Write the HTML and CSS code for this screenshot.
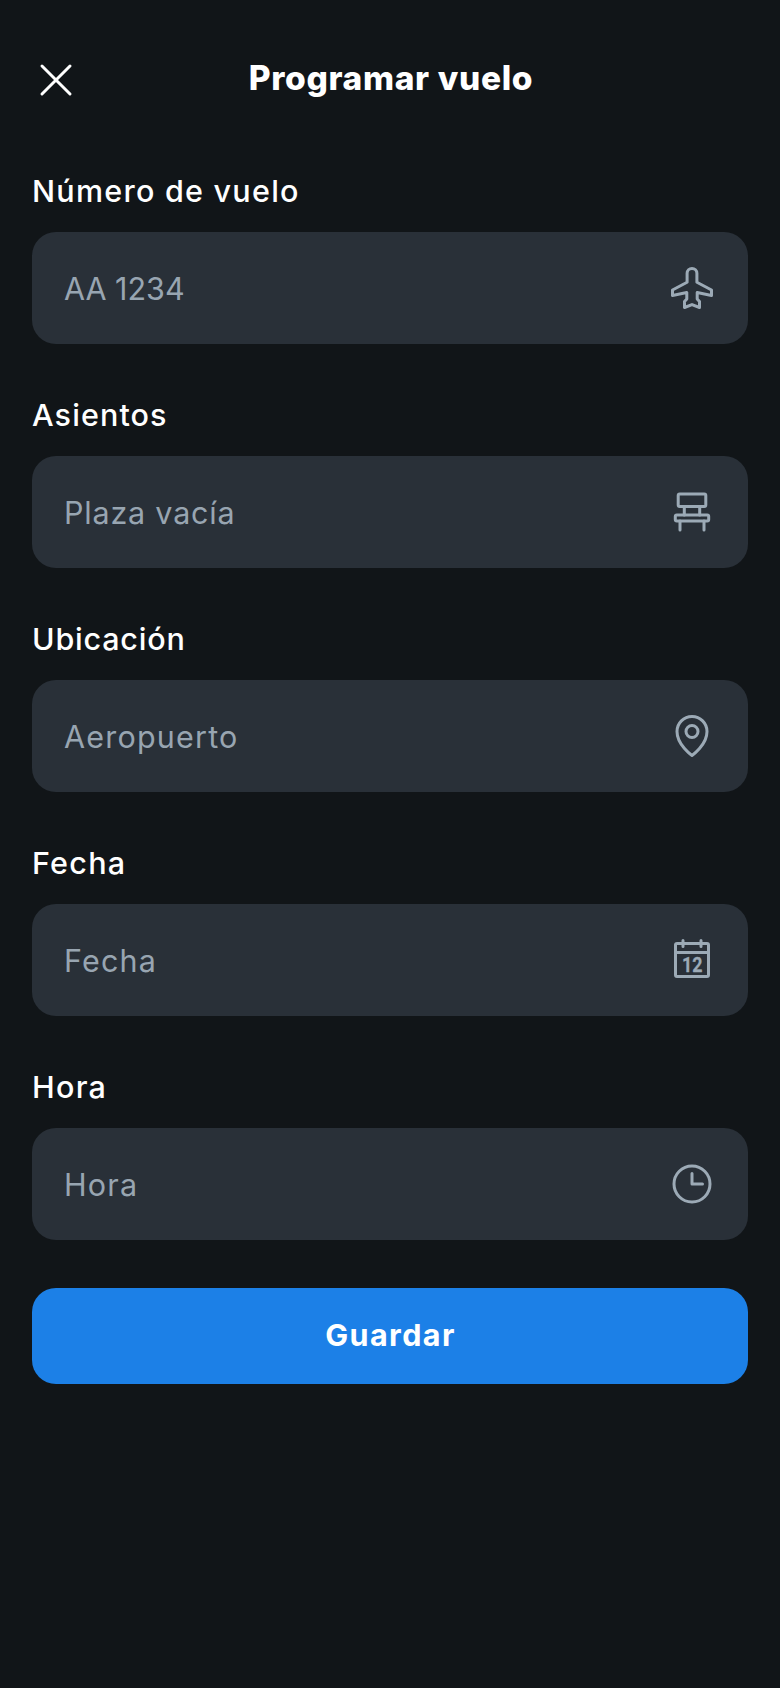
FILE: index.html
```html
<!DOCTYPE html>
<html lang="es">
<head>
<meta charset="utf-8">
<title>Programar vuelo</title>
<link rel="stylesheet" href="styles.css">
</head>
<body>
<main class="screen">
  <header class="header">
    <button class="close" type="button" aria-label="Cerrar">
      <svg class="icon" viewBox="0 0 48 48"><path d="M10 10 38 38M38 10 10 38"/></svg>
    </button>
    <h1 class="title">Programar vuelo</h1>
    <span class="spacer"></span>
  </header>
  <form class="form">
    <label class="field">
      <span class="label label-flight">Número de vuelo</span>
      <span class="box">
        <input class="input input-flight" placeholder="AA 1234">
        <svg class="icon" viewBox="0 0 48 48"><path d="M19.1 18.2V9.3a4.9 4.9 0 0 1 9.8 0v8.9L43.5 26v5.5l-14.3-3V35l2.3 2.6V43.5L24 40.6l-7.5 2.9V37.6L18.8 35V28.5L4.5 31.5V26Z"/></svg>
      </span>
    </label>
    <label class="field">
      <span class="label label-seats">Asientos</span>
      <span class="box">
        <input class="input input-seats" placeholder="Plaza vacía">
        <svg class="icon" viewBox="0 0 48 48"><rect x="10.2" y="6" width="27.6" height="12.4" rx="1.5"/><rect x="7.3" y="26.9" width="33.4" height="6" rx="1.5"/><path d="M16.3 18.4v8.5M31.7 18.4v8.5M12 33v9M36 33v9"/></svg>
      </span>
    </label>
    <label class="field">
      <span class="label label-place">Ubicación</span>
      <span class="box">
        <input class="input input-place" placeholder="Aeropuerto">
        <svg class="icon" viewBox="0 0 48 48"><circle cx="24" cy="19.5" r="6"/><path d="M39 19.5C39 33 24 43.5 24 43.5S9 33 9 19.5a15 15 0 0 1 30 0Z"/></svg>
      </span>
    </label>
    <label class="field">
      <span class="label label-date">Fecha</span>
      <span class="box">
        <input class="input input-date" placeholder="Fecha">
        <svg class="icon" viewBox="0 0 48 48"><rect x="7.5" y="7.5" width="33" height="33" rx="1.5"/><path d="M33 4.5v6M15 4.5v6M7.5 16.5h33"/><text class="day" x="14" y="35.6" textLength="20.5" lengthAdjust="spacingAndGlyphs">12</text></svg>
      </span>
    </label>
    <label class="field">
      <span class="label label-time">Hora</span>
      <span class="box">
        <input class="input input-time" placeholder="Hora">
        <svg class="icon" viewBox="0 0 48 48"><circle cx="24" cy="24" r="18"/><path d="M24 13.5V24h10.5"/></svg>
      </span>
    </label>
    <button class="save" type="button">Guardar</button>
  </form>
</main>
</body>
</html>
```
FILE: styles.css
```css
* { box-sizing: border-box; }
body {
  margin: 0;
  background: #111518;
  color: #fff;
  font-family: Inter, "Noto Sans", sans-serif;
}
.screen {
  min-height: 1688px;
  padding: 32px 32px 0;
}
.header {
  display: flex;
  align-items: center;
  height: 96px;
}
.close {
  display: flex;
  width: 48px;
  padding: 0;
  border: 0;
  background: none;
  color: #fff;
}
.title {
  flex: 1;
  margin: 0;
  padding-bottom: 4px;
  font-size: 33.5px;
  font-weight: 800;
  line-height: 46px;
  letter-spacing: 0.65px;
  text-align: center;
  white-space: nowrap;
}
.spacer { width: 46px; }
.form {
  display: flex;
  flex-direction: column;
  gap: 48px;
  padding-top: 40px;
}
.field {
  display: flex;
  flex-direction: column;
  gap: 16px;
}
.label {
  height: 48px;
  font-size: 30.5px;
  font-weight: 500;
  line-height: 45px;
  letter-spacing: 1.25px;
}
.label-seats { letter-spacing: 1.1px; }
.label-place { letter-spacing: 0.8px; }
.box {
  display: flex;
  align-items: center;
  height: 112px;
  padding: 0 32px;
  border-radius: 24px;
  background: #293038;
  color: #9caab6;
}
.input {
  flex: 1;
  min-width: 0;
  height: 48px;
  padding: 0;
  border: 0;
  outline: 0;
  background: none;
  color: #fff;
  font: 400 30.5px Inter, "Noto Sans", sans-serif;
  letter-spacing: 1.2px;
}
.input-flight { letter-spacing: 0; }
.input-seats { letter-spacing: 0.8px; }
.input::placeholder { color: #98a5b1; opacity: 1; }
.icon {
  width: 48px;
  height: 48px;
  fill: none;
  stroke: currentColor;
  stroke-width: 3;
  stroke-linecap: round;
  stroke-linejoin: round;
}
.day {
  fill: currentColor;
  stroke-width: 0.3;
  font: 700 21px Roboto, sans-serif;
}
.save {
  height: 96px;
  padding: 0 0 4px;
  border: 0;
  border-radius: 24px;
  background: #1c80e7;
  color: #fff;
  font: 700 30.5px Inter, "Noto Sans", sans-serif;
  letter-spacing: 1.4px;
  text-indent: 1px;
}
```
